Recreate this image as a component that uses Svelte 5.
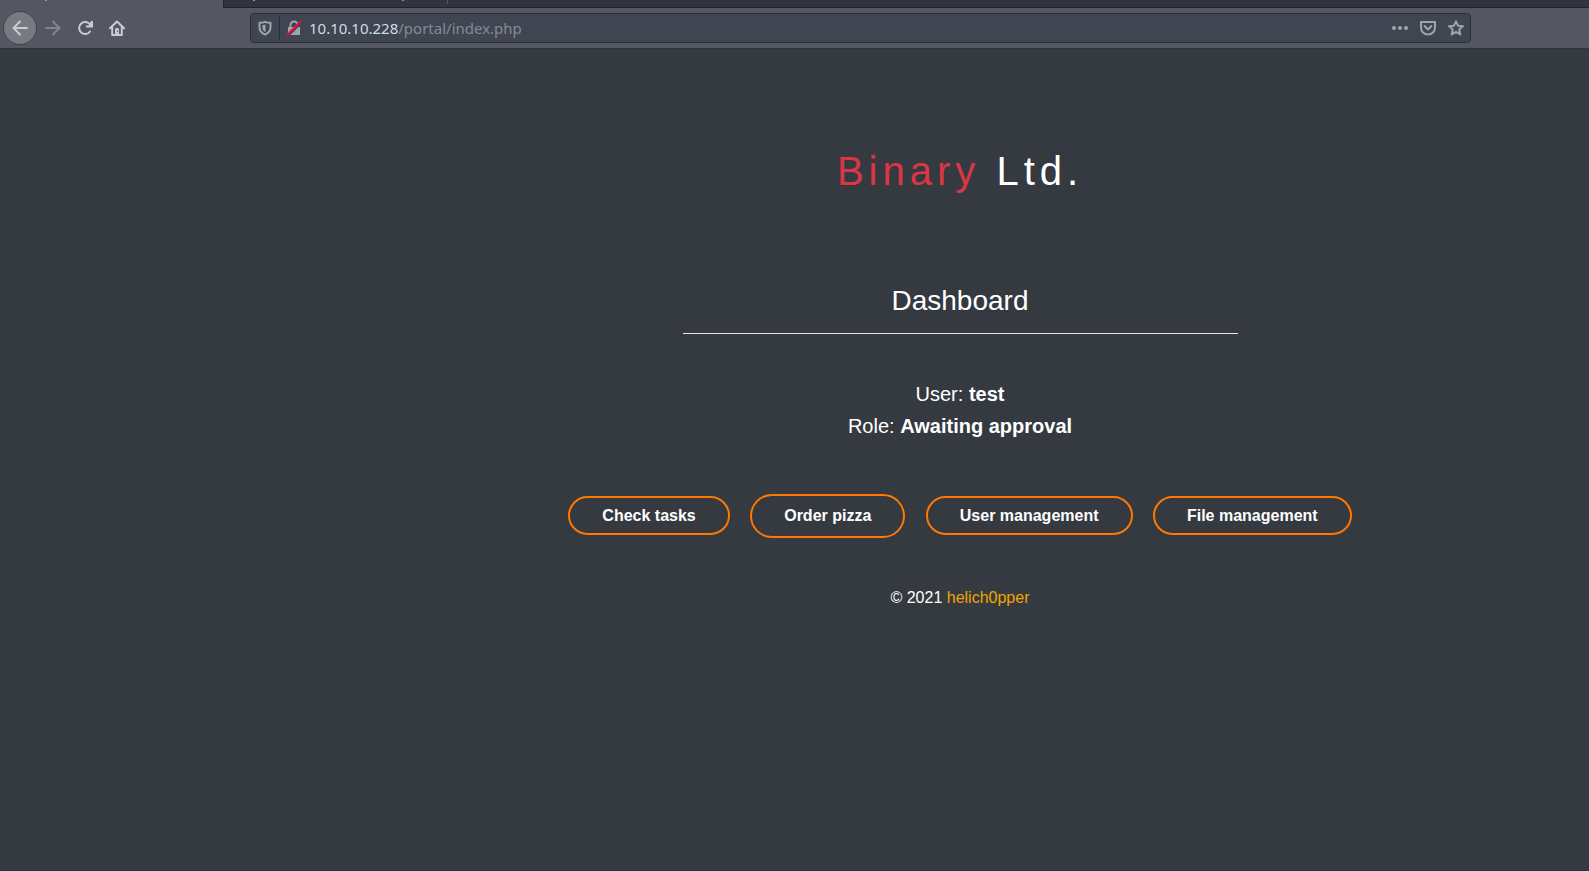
<script>
  const actions = [
    { label: 'Check tasks' },
    { label: 'Order pizza', form: true },
    { label: 'User management' },
    { label: 'File management' }
  ];
</script>

<div class="window">
  <div class="tabs" aria-hidden="true">
    <span class="tab active"><i></i></span>
    <span class="tab"><i></i><i></i></span>
  </div>

  <header class="toolbar">
    <nav class="nav" aria-label="Browser navigation">
      <button class="icon back" aria-label="Back">
        <svg width="16" height="16" viewBox="0 0 16 16"><path d="M15 8H1.5M8 1.5L1.5 8L8 14.5" /></svg>
      </button>
      <button class="icon dim" aria-label="Forward">
        <svg width="16" height="16" viewBox="0 0 16 16"><path d="M1 8h13.5M8 1.5L14.5 8L8 14.5" /></svg>
      </button>
      <button class="icon" aria-label="Reload">
        <svg width="16" height="16" viewBox="0 0 16 16"><path d="M13 11.500A6 6 0 1 1 12.800 4.200" /><path class="solid" d="M14 1h2v6.500H9v-2h2.500z" /></svg>
      </button>
      <button class="icon" aria-label="Home">
        <svg width="16" height="16" viewBox="0 0 16 16"><path d="M1 8.300L8 1.500l7 6.800M3.200 7v8h9.600V7" /><path class="solid" d="M6 15V9.200Q6 8 8 8t2 1.200V15z" /><path class="knob" d="M8 10.500h1v1.500H8z" /></svg>
      </button>
    </nav>

    <div class="urlbar">
      <button class="icon small" aria-label="Tracking protection">
        <svg width="14" height="16" viewBox="0 0 14 16"><path d="M7 1.800C5.500 2.500 3.500 2.800 1.500 2.800V7c0 4 2 6.300 5.500 7.500 3.500-1.200 5.500-3.500 5.500-7.500V2.800C10.500 2.800 8.500 2.500 7 1.800z" /><path class="solid" d="M7.500 4.500c-1 .4-2.200.5-3.100.6V7c0 2.600 1.100 4.200 3.100 5.200z" /></svg>
      </button>
      <span class="divider"></span>
      <button class="icon small" aria-label="Connection is not secure">
        <svg width="16" height="16" viewBox="0 0 16 16"><path d="M4.500 8V5a3.500 3.500 0 0 1 7 0v3" /><path class="solid" d="M2 7h12v8H2z" /><path class="gap" d="M2.500 15.500L15 3" /><path class="slash" d="M1.500 14.500L14.500 1.500" /></svg>
      </button>
      <span class="url">10.10.10.228<span>/portal/index.php</span></span>
      <span class="page-actions">
        <button class="icon small" aria-label="Page actions">
          <svg width="16" height="16" viewBox="0 0 16 16"><g class="solid"><circle cx="2" cy="8" r="2" /><circle cx="8" cy="8" r="2" /><circle cx="14" cy="8" r="2" /></g></svg>
        </button>
        <button class="icon small" aria-label="Save to Pocket">
          <svg width="16" height="16" viewBox="0 0 16 16"><path d="M1 2h14v5.500a7 7 0 0 1-14 0zM4.500 6L8 9.500 11.500 6" /></svg>
        </button>
        <button class="icon small" aria-label="Bookmark this page">
          <svg width="16" height="16" viewBox="0 0 16 16"><path d="M8 1.300l2 4.400 4.900.5-3.700 3.200 1.100 5-4.300-2.600-4.300 2.600 1.100-5L1.100 6.200 6 5.700z" /></svg>
        </button>
      </span>
    </div>
  </header>

  <main>
    <h1><span>Binary</span> Ltd.</h1>
    <h2>Dashboard</h2>
    <hr />
    <p class="info">User: <b>test</b><br />Role: <b>Awaiting approval</b></p>
    <div class="actions">
      {#each actions as action}
        {#if action.form}
          <button class="pill">{action.label}</button>
        {:else}
          <a class="pill" href="#top">{action.label}</a>
        {/if}
        {' '}
      {/each}
    </div>
    <footer>© 2021 <a href="#top">helich0pper</a></footer>
  </main>
</div>

<style>
  :global(body) {
    margin: 0;
    background: #353a41;
  }
  .window {
    min-height: 100vh;
    box-sizing: border-box;
    border-bottom: 1px solid #30333d;
    color: #fff;
    font-family: "Liberation Sans", Arial, sans-serif;
  }
  .tabs {
    display: flex;
    height: 8px;
    background: #2f343f;
    box-shadow: inset 0 -1px #20242d;
  }
  .tab {
    display: flex;
    justify-content: space-between;
    width: 224px;
    height: 4px;
    padding: 0 43px 0 29px;
    box-sizing: border-box;
    border-right: 1px solid #555964;
  }
  .tab.active {
    height: 8px;
    padding: 0 0 0 45px;
    background: #545762;
    border-right: 1px solid #20242d;
  }
  .tab i {
    width: 2px;
    height: 1px;
    background: #8e949f;
  }
  .toolbar {
    display: flex;
    align-items: center;
    height: 41px;
    padding: 0 118px 0 3px;
    background: #545762;
    border-bottom: 1px solid #2e323d;
    box-sizing: border-box;
  }
  .nav {
    display: flex;
    align-items: center;
    width: 247px;
    flex: none;
  }
  .icon {
    display: flex;
    align-items: center;
    justify-content: center;
    width: 32px;
    height: 32px;
    padding: 0;
    border: 0;
    background: none;
    color: #c6cbd8;
  }
  .icon.back {
    width: 34px;
    height: 34px;
    box-sizing: border-box;
    border: 1px solid #3d4049;
    border-radius: 50%;
    background: #777a81;
  }
  .icon.dim {
    color: #82858f;
  }
  .icon.small {
    width: 28px;
    height: 28px;
    color: #a0a4af;
  }
  svg {
    fill: none;
    stroke: currentColor;
    stroke-width: 2;
    stroke-linejoin: round;
    stroke-linecap: round;
  }
  .solid {
    fill: currentColor;
    stroke: none;
  }
  .knob {
    fill: #545762;
    stroke: none;
  }
  .gap {
    stroke: #404552;
    stroke-width: 2;
  }
  .slash {
    stroke: #f00c40;
  }
  .urlbar {
    display: flex;
    align-items: center;
    flex: 1;
    height: 30px;
    box-sizing: border-box;
    border: 1px solid #2b2e39;
    border-radius: 4px;
    background: #404552;
  }
  .divider {
    width: 1px;
    height: 22px;
    background: #2b2e39;
  }
  .url {
    flex: 1;
    padding-left: 1px;
    font: 15px/24px "Noto Sans", sans-serif;
    color: #d3dae3;
  }
  .url span {
    color: #858a96;
  }
  .page-actions {
    display: flex;
  }
  main {
    padding: 98px 0 0 331px;
    text-align: center;
  }
  h1 {
    margin: 0;
    font-size: 40px;
    line-height: 48px;
    font-weight: 400;
    letter-spacing: 5px;
  }
  h1 span {
    color: #dc3545;
  }
  h2 {
    margin: 90px 0 16px;
    font-size: 28px;
    line-height: 32px;
    font-weight: 400;
  }
  hr {
    width: 555px;
    max-width: 100%;
    height: 1px;
    margin: 0 auto;
    border: 0;
    background: #e5e6e7;
  }
  .info {
    margin: 44px 0 0;
    font-size: 20px;
    line-height: 32px;
  }
  .actions {
    margin-top: 52px;
    font-size: 16px;
    line-height: 24px;
  }
  .pill {
    display: inline-block;
    margin: 0 8px;
    padding: 8px 32px;
    border: 2px solid #ff7800;
    border-radius: 24px;
    background: none;
    color: #fff;
    font: bold 16px/24px "Liberation Sans", Arial, sans-serif;
    text-decoration: none;
  }
  a.pill {
    line-height: 19px;
  }
  footer {
    margin-top: 48px;
    font-size: 16px;
    line-height: 24px;
  }
  footer a {
    color: #f0a500;
    text-decoration: none;
  }
</style>
